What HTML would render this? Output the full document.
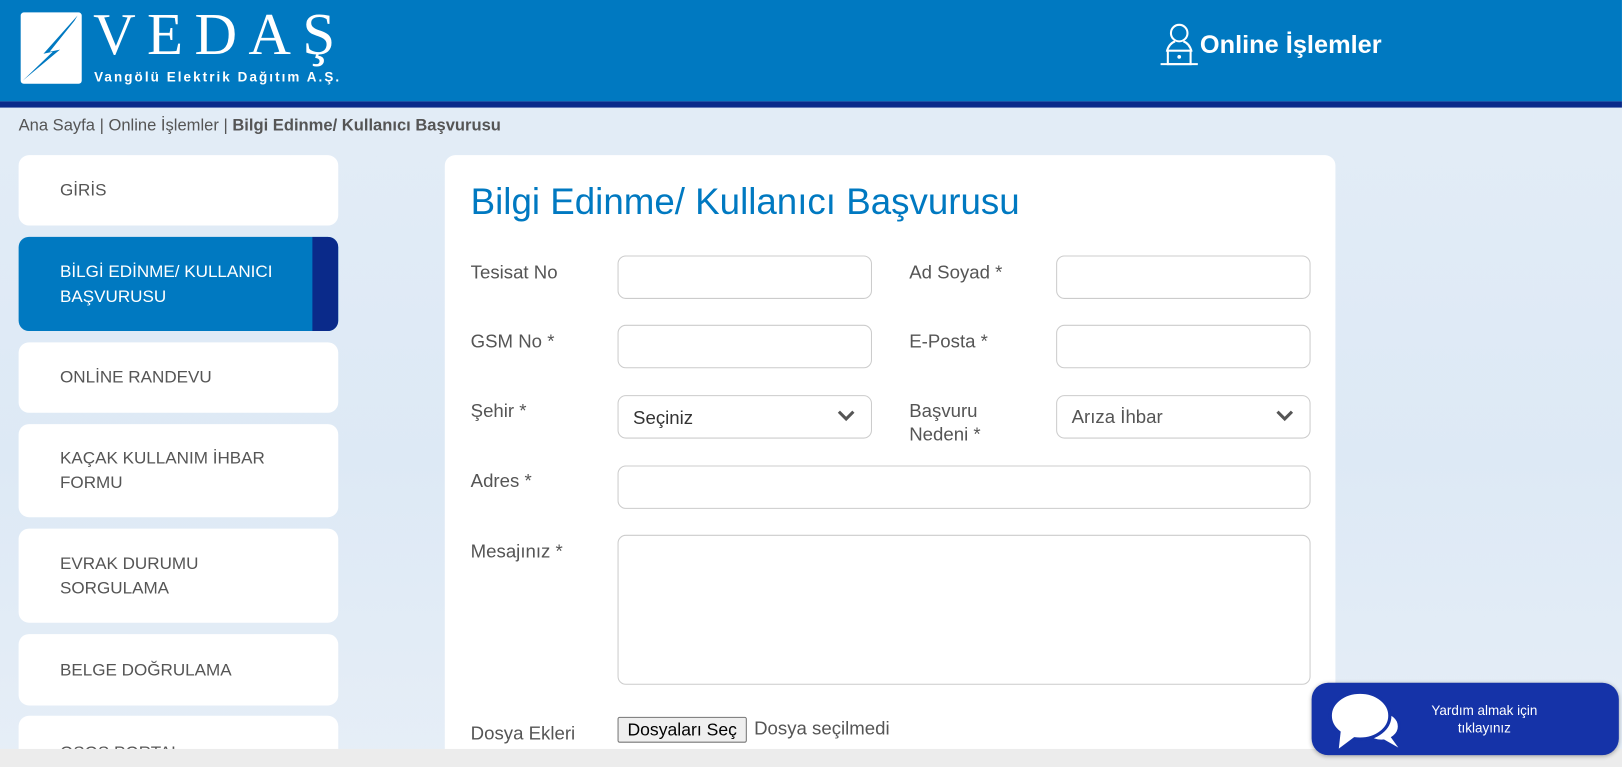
<!DOCTYPE html>
<html><head><meta charset="utf-8"><style>
*{box-sizing:border-box;margin:0;padding:0}
html,body{width:1622px;height:767px;overflow:hidden}
body{font-family:"Liberation Sans",sans-serif;background:linear-gradient(180deg,#e4edf7 0%,#dde9f5 60%,#e6eef7 100%);position:relative}
#w{position:absolute;left:0;top:0;width:1568px;height:742px;transform:scale(1.0344);transform-origin:0 0}
.hdr{position:absolute;left:0;top:0;width:1568px;height:98px;background:#0079c1}
.band{position:absolute;left:0;top:98px;width:1568px;height:6px;background:#0a2a8a}
.logo{position:absolute;left:20px;top:12px;width:59px;height:69px;background:#fff;border-radius:3px}
.ved{position:absolute;left:90px;top:5px;font-family:"Liberation Serif",serif;color:#fff;font-size:57px;letter-spacing:11px;line-height:57px}
.sub{position:absolute;left:91px;top:67px;color:#fff;font-size:13px;letter-spacing:2px;font-weight:bold}
.onl{position:absolute;left:1160px;top:30px;color:#fff;font-size:24.5px;font-weight:bold}
.bc{position:absolute;left:18px;top:113px;font-size:16px;color:#555}
.bc b{color:#555}
.card{position:absolute;left:18px;width:309px;background:#fff;border-radius:10px;color:#555;font-size:16.5px;padding-left:40px;display:flex;align-items:center;line-height:24px}
.card.act{background:#0079c1;color:#fff;overflow:hidden}
.card.act:after{content:"";position:absolute;right:0;top:0;width:25px;height:100%;background:#0a2a8a}
.main{position:absolute;left:430px;top:150px;width:861px;height:600px;background:#fff;border-radius:10px}
h1{position:absolute;left:455px;top:175px;font-weight:normal;font-size:35.5px;color:#0079c1}
.lb{position:absolute;font-size:18px;color:#555;line-height:23px}
.in{position:absolute;height:42px;border:1px solid #ccc;border-radius:8px;background:#fff;font-size:18px;color:#333;padding:11px 0 0 14px}
.chev{position:absolute;right:14px;top:12px}
.foot{position:absolute;left:0;top:724px;width:1568px;height:43px;background:#ececec}
.chat{position:absolute;left:1268px;top:660px;width:297px;height:70px;background:#1533a8;border-radius:16px;box-shadow:0 1px 4px rgba(0,0,0,.3)}
.chat span{position:absolute;left:92px;top:18px;width:150px;text-align:center;color:#fff;font-size:13px;line-height:17px}
.btn{position:absolute;left:597px;top:693px;width:125px;height:25px;border:1px solid #767676;border-radius:2px;background:#efefef;font-size:17px;text-align:center;line-height:23px;color:#000}
</style></head><body><div id="w">
<div class="hdr"></div><div class="band"></div>
<div class="logo"><svg width="59" height="69" viewBox="0 0 59 69"><path d="M55 3 L22 40 L31 38 L2 66 L38 36 L28 38 L52 8 Z" fill="#0079c1"/></svg></div>
<div class="ved">VEDAŞ</div>
<div class="sub">Vangölü Elektrik Dağıtım A.Ş.</div>
<svg style="position:absolute;left:1120px;top:22px" width="40" height="42" viewBox="0 0 40 42" fill="none" stroke="#fff" stroke-width="2"><circle cx="20" cy="10" r="8"/><path d="M8 28 Q10 20 16 18 M32 28 Q30 20 24 18"/><rect x="9" y="27" width="22" height="13"/><path d="M2 40 H38"/><circle cx="20" cy="33" r="0.8" fill="#fff"/></svg>
<div class="onl">Online İşlemler</div>
<div class="bc">Ana Sayfa | Online İşlemler | <b>Bilgi Edinme/ Kullanıcı Başvurusu</b></div>
<div class="card" style="top:150px;height:68px">GİRİS</div>
<div class="card act" style="top:229px;height:91px">BİLGİ EDİNME/ KULLANICI<br>BAŞVURUSU</div>
<div class="card" style="top:331px;height:68px">ONLİNE RANDEVU</div>
<div class="card" style="top:410px;height:90px">KAÇAK KULLANIM İHBAR<br>FORMU</div>
<div class="card" style="top:511px;height:91px">EVRAK DURUMU<br>SORGULAMA</div>
<div class="card" style="top:613px;height:69px">BELGE DOĞRULAMA</div>
<div class="card" style="top:692px;height:60px;align-items:flex-start;padding-top:24px">OSOS PORTAL</div>
<div class="main"></div>
<h1>Bilgi Edinme/ Kullanıcı Başvurusu</h1>
<div class="lb" style="left:455px;top:252px">Tesisat No</div>
<div class="in" style="left:597px;top:247px;width:246px"></div>
<div class="lb" style="left:879px;top:252px">Ad Soyad *</div>
<div class="in" style="left:1021px;top:247px;width:246px"></div>
<div class="lb" style="left:455px;top:319px">GSM No *</div>
<div class="in" style="left:597px;top:314px;width:246px"></div>
<div class="lb" style="left:879px;top:319px">E-Posta *</div>
<div class="in" style="left:1021px;top:314px;width:246px"></div>
<div class="lb" style="left:455px;top:386px">Şehir *</div>
<div class="in" style="left:597px;top:382px;width:246px">Seçiniz<svg class="chev" width="20" height="14" viewBox="0 0 20 14"><path d="M3 3 L10 10 L17 3" stroke="#555" stroke-width="3" fill="none"/></svg></div>
<div class="lb" style="left:879px;top:386px">Başvuru<br>Nedeni *</div>
<div class="in" style="left:1021px;top:382px;width:246px;color:#555;padding-top:10px">Arıza İhbar<svg class="chev" width="20" height="14" viewBox="0 0 20 14"><path d="M3 3 L10 10 L17 3" stroke="#555" stroke-width="3" fill="none"/></svg></div>
<div class="lb" style="left:455px;top:454px">Adres *</div>
<div class="in" style="left:597px;top:450px;width:670px"></div>
<div class="lb" style="left:455px;top:522px">Mesajınız *</div>
<div class="in" style="left:597px;top:517px;width:670px;height:145px"></div>
<div class="lb" style="left:455px;top:698px">Dosya Ekleri</div>
<div class="btn">Dosyaları Seç</div>
<div class="lb" style="left:729px;top:693px">Dosya seçilmedi</div>
<div class="foot"></div>
<div class="chat"><svg style="position:absolute;left:16px;top:5px" width="74" height="62" viewBox="0 0 72 58"><ellipse cx="50" cy="35" rx="17" ry="14" fill="#fff" stroke="#1533a8" stroke-width="3"/><path d="M58 44 L66 55 L52 47Z" fill="#fff"/><ellipse cx="30" cy="25" rx="28" ry="22" fill="#fff" stroke="#1533a8" stroke-width="3"/><path d="M12 38 L10 56 L26 44Z" fill="#fff"/></svg><span>Yardım almak için tıklayınız</span></div>
</div></body></html>
